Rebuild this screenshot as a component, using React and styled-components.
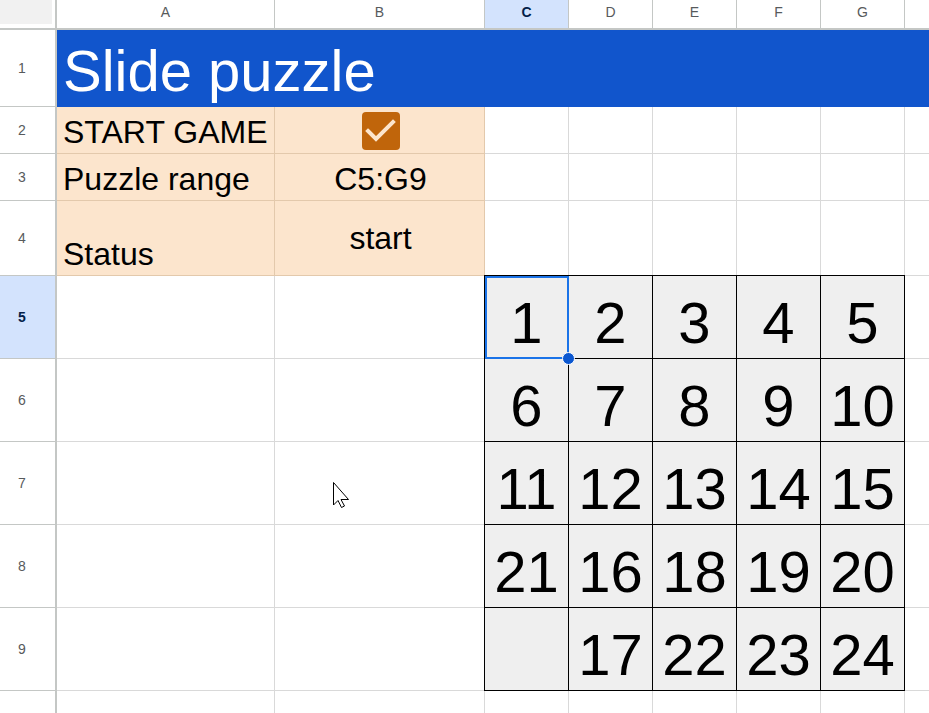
import React from "react";
import styled, { createGlobalStyle, css } from "styled-components";

const colors = {
  grid: "#d9d9d9",
  headerLine: "#c4c7c5",
  headerText: "#575a5c",
  activeHeader: "#d3e3fd",
  activeText: "#041e49",
  blue: "#1155cc",
  peach: "#fce5cd",
  tan: "#e3c9ac",
  orange: "#c0650b",
  tile: "#efefef",
  select: "#1a73e8",
};

const COLS = ["A", "B", "C", "D", "E", "F", "G", "H"];

const TILES = [
  [1, 2, 3, 4, 5],
  [6, 7, 8, 9, 10],
  [11, 12, 13, 14, 15],
  [21, 16, 18, 19, 20],
  [null, 17, 22, 23, 24],
];

const GlobalStyle = createGlobalStyle`
  html, body {
    margin: 0;
    padding: 0;
    background: #fff;
    overflow: hidden;
  }
`;

const Sheet = styled.div`
  position: relative;
  display: grid;
  grid-template-columns: 57px 218px 210px repeat(6, 84px);
  grid-template-rows: 30px 77px 47px 47px 75px repeat(6, 83px);
  width: 100vw;
  height: 100vh;
  overflow: hidden;
  font-family: "Liberation Sans", Arial, sans-serif;
  color: #000;
`;

const Corner = styled.div`
  box-sizing: border-box;
  border-right: 2px solid ${colors.headerLine};
  border-bottom: 2px solid ${colors.headerLine};
  background: #fff;

  .fill {
    width: 52px;
    height: 24px;
    background: #f1f1f1;
  }
`;

const ColHeader = styled.div`
  box-sizing: border-box;
  display: flex;
  align-items: center;
  justify-content: center;
  padding-bottom: 4px;
  font-size: 14px;
  color: ${(p) => (p.$active ? colors.activeText : colors.headerText)};
  font-weight: ${(p) => (p.$active ? 700 : 400)};
  background: ${(p) => (p.$active ? colors.activeHeader : "#fff")};
  border-right: 1px solid ${colors.headerLine};
  border-bottom: 2px solid ${colors.headerLine};
`;

const RowHeader = styled.div`
  box-sizing: border-box;
  display: flex;
  align-items: center;
  justify-content: center;
  padding-right: 11px;
  font-size: 14px;
  color: ${(p) => (p.$active ? colors.activeText : colors.headerText)};
  font-weight: ${(p) => (p.$active ? 700 : 400)};
  background: ${(p) => (p.$active ? colors.activeHeader : "#fff")};
  border-right: 2px solid ${colors.headerLine};
  border-bottom: 1px solid ${colors.headerLine};
`;

const TitleCell = styled.div`
  grid-column: 2 / -1;
  display: flex;
  align-items: flex-end;
  padding: 0 0 3px 6px;
  background: ${colors.blue};
  color: #fff;
  font-size: 58px;
  white-space: nowrap;
`;

const Cell = styled.div`
  box-sizing: border-box;
  border-right: 1px solid ${colors.grid};
  border-bottom: 1px solid ${colors.grid};
  background: #fff;
`;

const FormCell = styled.div`
  box-sizing: border-box;
  display: flex;
  justify-content: ${(p) => (p.$center ? "center" : "flex-start")};
  align-items: ${(p) => (p.$middle ? "center" : "flex-end")};
  padding: 0 4px 2px 6px;
  background: ${colors.peach};
  border-right: 1px solid ${colors.tan};
  border-bottom: 1px solid ${colors.tan};
  font-size: 32px;
  white-space: nowrap;
  ${(p) =>
    p.$middle &&
    css`
      padding-bottom: 0;
    `}
`;

const Checkbox = styled.span`
  display: flex;
  align-items: center;
  justify-content: center;
  width: 38px;
  height: 38px;
  margin-top: 3px;
  align-self: center;
  border-radius: 4px;
  background: ${colors.orange};
`;

const Puzzle = styled.div`
  grid-column: 4 / 9;
  grid-row: 6 / 11;
  margin: -1px 0 0 -1px;
  position: relative;
  z-index: 1;
  display: grid;
  grid-template-columns: repeat(5, 1fr);
  grid-template-rows: repeat(5, 1fr);
  border-left: 1px solid #000;
  border-top: 1px solid #000;
`;

const Tile = styled.div`
  position: relative;
  display: flex;
  align-items: flex-end;
  justify-content: center;
  padding-bottom: 2px;
  background: ${colors.tile};
  border-right: 1px solid #000;
  border-bottom: 1px solid #000;
  font-size: 58px;
  white-space: nowrap;

  ${(p) =>
    p.$selected &&
    css`
      z-index: 2;
      &::after {
        content: "";
        position: absolute;
        inset: 0 -1px -1px 0;
        border: 2px solid ${colors.select};
        pointer-events: none;
      }
    `}
`;

const Handle = styled.span`
  position: absolute;
  right: -7px;
  bottom: -7px;
  z-index: 3;
  width: 11px;
  height: 11px;
  border: 1px solid #fff;
  border-radius: 50%;
  background: #0b57d0;
`;

const Pointer = styled.svg`
  position: absolute;
  left: 332px;
  top: 481px;
  z-index: 5;
`;

function CheckIcon() {
  return (
    <svg width="38" height="38" viewBox="0 0 38 38">
      <polyline
        points="6,19 14,27 31,10"
        fill="none"
        stroke={colors.peach}
        strokeWidth="4"
        strokeLinecap="square"
      />
    </svg>
  );
}

export default function App() {
  const emptyRow = (n, key) =>
    Array.from({ length: n }, (_, i) => <Cell key={`${key}-${i}`} />);

  return (
    <>
      <GlobalStyle />
      <Sheet>
        <Corner>
          <div className="fill" />
        </Corner>
        {COLS.map((c) => (
          <ColHeader key={c} $active={c === "C"}>
            {c === "H" ? "" : c}
          </ColHeader>
        ))}

        <RowHeader>1</RowHeader>
        <TitleCell>Slide puzzle</TitleCell>

        <RowHeader>2</RowHeader>
        <FormCell>START GAME</FormCell>
        <FormCell $center>
          <Checkbox>
            <CheckIcon />
          </Checkbox>
        </FormCell>
        {emptyRow(6, "r2")}

        <RowHeader>3</RowHeader>
        <FormCell>Puzzle range</FormCell>
        <FormCell $center>C5:G9</FormCell>
        {emptyRow(6, "r3")}

        <RowHeader>4</RowHeader>
        <FormCell>Status</FormCell>
        <FormCell $center $middle>
          start
        </FormCell>
        {emptyRow(6, "r4")}

        {[5, 6, 7, 8, 9].map((r) => (
          <React.Fragment key={r}>
            <RowHeader $active={r === 5}>{r}</RowHeader>
            <Cell />
            <Cell />
            <Cell />
          </React.Fragment>
        ))}

        <RowHeader />
        {emptyRow(8, "r10")}

        <Puzzle>
          {TILES.flat().map((n, i) => (
            <Tile key={i} $selected={i === 0}>
              {n}
              {i === 0 && <Handle />}
            </Tile>
          ))}
        </Puzzle>

        <Pointer width="20" height="28" viewBox="0 0 20 28">
          <path
            d="M1.5 1.5 L1.5 24 L6 19.5 L9.5 26.5 L12.5 25 L9 18.5 L16.5 18.5 Z"
            fill="#fff"
            stroke="#000"
            strokeWidth="1"
          />
        </Pointer>
      </Sheet>
    </>
  );
}
